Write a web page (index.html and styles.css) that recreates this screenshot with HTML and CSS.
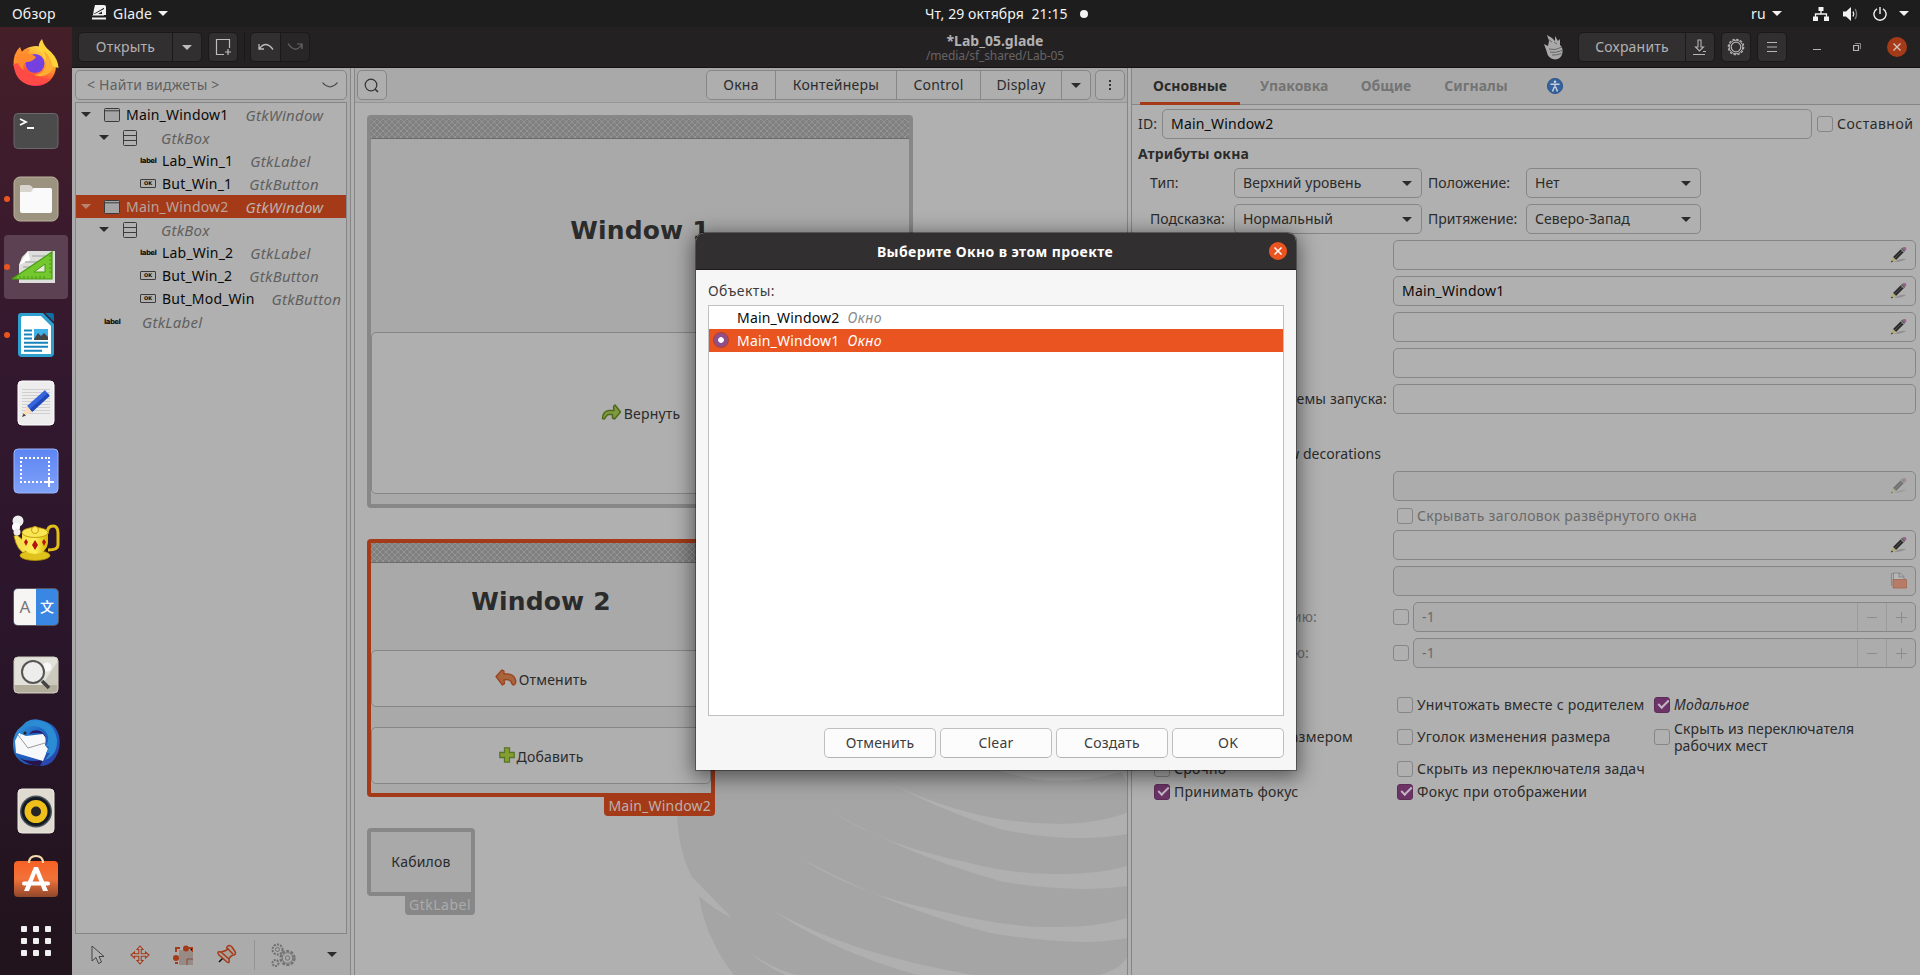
FILE: index.html
```html
<!DOCTYPE html>
<html lang="ru">
<head>
<meta charset="utf-8">
<title>*Lab_05.glade</title>
<link rel="stylesheet" href="styles.css">
</head>
<body>
<svg class="defs" width="0" height="0" aria-hidden="true">
  <defs>
    <pattern id="hatch" width="12" height="12" patternUnits="userSpaceOnUse">
      <rect width="12" height="12" fill="#808080"/>
      <path d="M0 0L12 12M12 0L0 12M6 0L0 6M6 0L12 6M0 6L6 12M12 6L6 12" stroke="#969696" stroke-width=".9" fill="none"/>
    </pattern>
    <linearGradient id="ffg" x1=".8" y1="0" x2=".3" y2="1"><stop offset="0" stop-color="#fff04a"/><stop offset=".4" stop-color="#ff9a2e"/><stop offset=".75" stop-color="#ff4a3a"/><stop offset="1" stop-color="#e8128c"/></linearGradient>
    <linearGradient id="tbg" x1="0" y1="0" x2="1" y2="1"><stop offset="0" stop-color="#3aa5e0"/><stop offset=".4" stop-color="#2068c4"/><stop offset="1" stop-color="#2b3ba8"/></linearGradient>
    <linearGradient id="swg" x1="0" y1="0" x2="0" y2="1"><stop offset="0" stop-color="#f76125"/><stop offset=".5" stop-color="#f2723a"/><stop offset="1" stop-color="#90472c"/></linearGradient>
    <linearGradient id="teag" x1="0" y1="0" x2="1" y2="0"><stop offset="0" stop-color="#f7e04a"/><stop offset=".5" stop-color="#fdf05a"/><stop offset="1" stop-color="#d9b400"/></linearGradient>
    <linearGradient id="shotg" x1="0" y1="0" x2="0" y2="1"><stop offset="0" stop-color="#5d85f3"/><stop offset="1" stop-color="#80a2f9"/></linearGradient>
    <symbol id="pencil" viewBox="0 0 18 18">
      <path d="M4 16Q10 12 16 13Q12 16 4 16" fill="#8f8f8f"/>
      <path d="M3 11L12 2L15 5L6 14Z" fill="#2b2b2b"/><path d="M4.5 12.5L13.5 3.5" stroke="#555" stroke-width=".9"/>
      <path d="M12 2L13.5 .9L16 1.2L16.3 3.4L15 5Z" fill="#96628c"/><path d="M11 3L14 6" stroke="#8c8c8c" stroke-width="1.4"/>
      <path d="M3 11L6 14L1 16.5Z" fill="#b3ab6d"/><path d="M1 16.5L1.8 14.4L3 15.6Z" fill="#111"/>
    </symbol>
    <symbol id="window" viewBox="0 0 16 14"><rect x=".5" y=".5" width="15" height="13" rx="1" fill="#a5a5a5" stroke="#3b3b3b"/><path d="M1 2.8H15" stroke="#3b3b3b" stroke-width="1"/></symbol>
    <symbol id="box" viewBox="0 0 14 16"><rect x=".5" y=".5" width="13" height="15" rx="1" fill="none" stroke="#3b3b3b"/><path d="M1 5.5H13M1 10.5H13" stroke="#3b3b3b"/></symbol>
  </defs>
</svg>

<header class="topbar">
  <div class="top-left"><span class="overview">Обзор</span>
    <svg width="14" height="16" viewBox="0 0 14 16"><path d="M3 0H12Q14 0 14 2V10H1L2 4Z" fill="#f2f2f2"/><path d="M1.5 9L12 2.8V8.6Z" fill="#1d1d1d"/><path d="M0 10.5L12 4V10.5ZM0 12.5H14V14.6H0Z" fill="#f2f2f2"/><path d="M6 9L10 6.6V9Z" fill="#1d1d1d"/></svg>
    <span class="appname">Glade</span><i class="caret light"></i></div>
  <div class="top-mid"><span>Чт, 29 октября&nbsp; 21:15</span><i class="dot"></i></div>
  <div class="top-right"><span>ru</span><i class="caret light"></i>
    <svg class="net" width="16" height="14" viewBox="0 0 16 14"><path d="M5.5 0h5v4h-5zM0 9.5h5V14H0zM11 9.5h5V14h-5z" fill="#f2f2f2"/><path d="M8 4V7M2.5 10V7H13.5V10" stroke="#f2f2f2" stroke-width="1.3" fill="none"/></svg>
    <svg width="16" height="14" viewBox="0 0 16 14"><path d="M0 4.5H3L8 0V14L3 9.5H0Z" fill="#f2f2f2"/><path d="M10 4.5Q11.5 7 10 9.5" stroke="#f2f2f2" stroke-width="1.4" fill="none"/><path d="M12 2Q15.2 7 12 12" stroke="#777" stroke-width="1.4" fill="none"/></svg>
    <svg width="14" height="14" viewBox="0 0 14 14"><path d="M4 1.8A6.1 6.1 0 1 0 10 1.8M7 0V7" stroke="#f2f2f2" stroke-width="1.4" fill="none"/></svg>
    <i class="caret light"></i></div>
</header>

<div class="desktop">
<nav class="dock">
  <div class="slot"><svg width="48" height="48" viewBox="0 0 48 48"><circle cx="24" cy="27" r="20" fill="url(#ffg)"/><path d="M1.5 27Q1 14 8 8L10 13Q14 9 18 10L14 18Z" fill="#ff9130"/><path d="M27 10Q26 4 30 0Q32 8 39 13Q46 20 46.500 29L36 26Z" fill="#ffd33a"/><path d="M1.500 25Q3 42 17 46Q30 48 38 40L20 38Q10 34 12 23Z" fill="#ff4a45"/><circle cx="23" cy="24.500" r="9.500" fill="#7540e0"/><path d="M4 17Q14 11 24 18Q21 23 14 23Q10 26 12 31Q5 28 4 17Z" fill="#ff8a2e"/><path d="M31 11Q35 18 34 26Q32 35 22 36Q34 40 41 30Q40 18 31 11" fill="#ffad33"/></svg></div>
  <div class="slot"><svg width="48" height="48" viewBox="0 0 48 48"><rect x="2" y="6.500" width="44" height="35" rx="4" fill="#4b4b4b" stroke="#696969"/><path d="M8 12L14 15L8 18M15 21H22" stroke="#fff" stroke-width="1.8" fill="none"/></svg></div>
  <div class="slot run"><svg width="48" height="48" viewBox="0 0 48 48"><rect x="2" y="2" width="44" height="44" rx="6" fill="#9b9280" stroke="#bdb59e"/><path d="M8 14V11Q8 10 10 10H17Q19 10 21 13H38Q40 13 40 15V25H8Z" fill="#d9d5ce"/><path d="M8 17H19L22 13H38Q40 13 40 15V36Q40 38 38 38H10Q8 38 8 36Z" fill="#fafafa"/></svg></div>
  <div class="slot run active"><svg width="48" height="48" viewBox="0 0 48 48"><path d="M10 14L16 8H43V40H7V22Z" fill="#dedfdc"/><path d="M7 22L16 8L18 17Z" fill="#fff"/><path d="M11 24H34M13 19H34M20 13H40" stroke="#b4b4b4" stroke-width="1.500"/><path d="M0 36L40 9V36Z" fill="#72c82c" stroke="#4b9916" stroke-width="1.200"/><path d="M22 29L33 21V29Z" fill="#e6ead9" stroke="#4b9916"/><path d="M4 36V33M8 36V33M12 36V33M16 36V33M20 36V33M24 36V33M28 36V33M32 36V33M40 13H37M40 17H37M40 21H37M40 25H37M40 29H37" stroke="#4b9916"/></svg></div>
  <div class="slot run"><svg width="48" height="48" viewBox="0 0 48 48"><path d="M9 2H31L42 13V42Q42 46 38 46H10Q6 46 6 42V5Q6 2 9 2Z" fill="#2ea0d0"/><path d="M33 2H40Q42 2 42 5V11Z" fill="#0f6ea6"/><path d="M11 5H29L39 15V43H9V8Q9 5 11 5Z" fill="#fff"/><path d="M12 19.500H20M12 23.500H20M12 27.500H20M12 31.800H36M12 35.800H36M12 39.800H30" stroke="#1784ba" stroke-width="2"/><rect x="22" y="18" width="14" height="11" fill="#3db1e8"/><path d="M22 28L26 22L29 25L32 22L36 26V29H22Z" fill="#444"/></svg></div>
  <div class="slot"><svg width="48" height="48" viewBox="0 0 48 48"><rect x="6" y="2" width="36" height="44" rx="4" fill="#ededed" stroke="#fff"/><path d="M10 10.500H38M10 13.500H38M10 16.500H38M10 19.500H38M10 22.500H38M10 25.500H38M10 28.500H38M10 31.500H38M10 34.500H38" stroke="#cfcfcf"/><path d="M15 27L33 11L37.500 17L20 33Z" fill="#3465df"/><path d="M18 30L36 14L37.500 17L20 33Z" fill="#2048b8"/><path d="M15 27L20 33L10 38Z" fill="#fbdcbc"/><path d="M10 38L11.500 34.500L14 36.500Z" fill="#444"/></svg></div>
  <div class="slot"><svg width="48" height="48" viewBox="0 0 48 48"><rect x="2" y="2" width="44" height="44" rx="4" fill="url(#shotg)" stroke="#9ab5fc"/><path d="M9 11H38" stroke="#fff" stroke-width="2" stroke-dasharray="2 2"/><path d="M9 10V36M37 10V30" stroke="#fff" stroke-width="2" stroke-dasharray="2 2" fill="none"/><path d="M8 35H32" stroke="#fff" stroke-width="2" stroke-dasharray="2 2"/><path d="M32 35H42M37 30V40" stroke="#fff" stroke-width="2"/></svg></div>
  <div class="slot"><svg width="48" height="48" viewBox="0 0 48 48"><path d="M35 19Q35 11 41 11Q46 11 46 18V30Q46 35 36 35" fill="none" stroke="#e2be1a" stroke-width="3"/><path d="M2 21L5 20L12 26L14 39Q5 36 2 21Z" fill="#f5df50" stroke="#b58f00" stroke-width=".8"/><ellipse cx="23" cy="40.500" rx="15" ry="5" fill="#e0c21c" stroke="#b58f00" stroke-width=".8"/><path d="M10 17H36V28Q35 38 23 39Q10 38 10 28Z" fill="url(#teag)"/><ellipse cx="23" cy="17.500" rx="13" ry="5" fill="#f8e654" stroke="#b58f00" stroke-width=".8"/><circle cx="23" cy="15" r="3.500" fill="#ffe95e" stroke="#c9a10a"/><path d="M23 25L26 30L23 35L20 30ZM14 24L16 27L14 31L12 27ZM32 24L34 27L32 31L30 27Z" fill="#b51212"/><circle cx="6" cy="6" r="5.500" fill="#eee"/><circle cx="4" cy="12" r="4" fill="#fff"/><circle cx="5" cy="17" r="3.500" fill="#ececec"/></svg></div>
  <div class="slot"><div class="translate"><b>A</b><b>文</b></div></div>
  <div class="slot"><svg width="48" height="48" viewBox="0 0 48 48"><rect x="2" y="6" width="44" height="36" rx="4" fill="#e2e2da" stroke="#cfcdbf"/><path d="M30 34L46 10V34Z" fill="#cbc9bc"/><path d="M2.500 34H45.500V38Q45 41.500 42 41.500H6Q3 41.500 2.500 38Z" fill="#b3ae9c"/><circle cx="35" cy="16" r="4.500" fill="#f8f8f8"/><circle cx="21" cy="21" r="11" fill="#eeeeec" fill-opacity=".9" stroke="#555" stroke-width="2"/><path d="M30 30L37 37" stroke="#444" stroke-width="3.500"/></svg></div>
  <div class="slot"><svg width="48" height="48" viewBox="0 0 48 48"><path d="M14 3Q20-1 28 1Q44 4 47 17Q50 32 40 43Q35 47 28 47L13 45Q2 40 1 28Q0 14 10 7Z" fill="url(#tbg)"/><path d="M6 37Q12 44 31 41L28 47Q14 46 6 37Z" fill="#26144a"/><path d="M3 22L7 14L14 17L31 15Q35 18 33 26L36 30L31 42L4 34Z" fill="#f7f8fa"/><path d="M6 16L16 29L33 24" stroke="#9b9b9b" fill="none"/><path d="M8 18Q10 6 22 7Q32 8 35 15Q38 20 34 27L37 28L34 34L38 34L33 41Q46 36 45 20Q42 5 30 2Q18-1 12 8Z" fill="#2b8bd3"/><path d="M20 12Q30 9 34 19L31 15Q26 13 17 15Z" fill="#2a1a6a"/><circle cx="13" cy="14" r="1.500" fill="#222"/></svg></div>
  <div class="slot"><svg width="48" height="48" viewBox="0 0 48 48"><rect x="6" y="2" width="36" height="44" rx="4" fill="#dfdbd1" stroke="#eeebe2"/><circle cx="24" cy="24.500" r="16" fill="#49535b"/><circle cx="24" cy="24.500" r="14.500" fill="#141a22"/><circle cx="24" cy="24.500" r="11.500" fill="#efc01c"/><circle cx="24" cy="24.500" r="5" fill="#262626"/></svg></div>
  <div class="slot"><svg width="48" height="48" viewBox="0 0 48 48"><rect x="2" y="6" width="44" height="36" rx="4" fill="url(#swg)"/><path d="M17 8Q17 1 24 1Q31 1 31 8" fill="none" stroke="#f6ddb0" stroke-width="2"/><path d="M22 12H26L36 36H31L24 18L17 36H12Z" fill="#fff"/><path d="M12 28.500H36" stroke="#fff" stroke-width="4" stroke-linecap="round"/></svg></div>
  <div class="apps"><i></i><i></i><i></i><i></i><i></i><i></i><i></i><i></i><i></i></div>
</nav>

<main class="app">
  <div class="headerbar">
    <div class="hb-left">
      <div class="hbtns"><span class="hbtn open">Открыть</span><span class="hbtn drop"><i class="caret dim"></i></span></div>
      <span class="hbtn icon"><svg width="17" height="18" viewBox="0 0 17 18"><path d="M9 16.500H1.500V1.500H14.500V10M13 11V17M10 14H16" stroke="#bdbdbd" fill="none" stroke-width="1.200"/></svg></span>
      <i class="hsep"></i>
      <div class="hbtns"><span class="hbtn undo"><svg width="16" height="10" viewBox="0 0 16 10"><path d="M1 2V7H6M1.500 6.500Q8-2 15 7.500" stroke="#bdbdbd" fill="none" stroke-width="1.300"/></svg></span><span class="hbtn undo off"><svg width="16" height="10" viewBox="0 0 16 10"><path d="M15 7V2H10M1 1.500Q8 12 14.500 3" stroke="#6a6869" fill="none" stroke-width="1.200"/></svg></span></div>
    </div>
    <div class="title"><b>*Lab_05.glade</b><span>/media/sf_shared/Lab-05</span></div>
    <div class="hb-right">
      <svg class="hand" width="19" height="25" viewBox="0 0 19 25"><path d="M3 0L8 3L11 6L11 1L14 6L16 4L16 10Q19 12 18.500 18Q17 24 11 24.500Q4 24 2.500 16L0 9L4 11L5 6Z" fill="#a9a9a9"/><path d="M5 14Q11 16 18 12M6 17Q11 18.500 18 15.500M8 20Q12 20.500 17.500 18.500M4 4L8 7M10 7L13 9" stroke="#4a4849" stroke-width=".7" fill="none"/></svg>
      <div class="hbtns"><span class="hbtn save">Сохранить</span><span class="hbtn drop"><svg width="14" height="17" viewBox="0 0 14 17"><path d="M5 1H8V8H10.500L6.500 12L2.500 8H5ZM0 15.500H12M10 12.500H13" stroke="#b5b5b5" fill="none" stroke-width="1.100"/></svg></span></div>
      <span class="hbtn icon"><svg width="18" height="18" viewBox="0 0 18 18"><circle cx="9" cy="9" r="4.800" fill="none" stroke="#b5b5b5" stroke-width="1.200"/><circle cx="9" cy="9" r="6.800" fill="none" stroke="#b5b5b5" stroke-width="1"/><circle cx="9" cy="9" r="7.700" fill="none" stroke="#b5b5b5" stroke-width="1.300" stroke-dasharray="2.400 1.632"/></svg></span>
      <span class="hbtn icon"><svg width="12" height="12" viewBox="0 0 12 12"><path d="M1 1.500H11M1 6H11M1 10.500H11" stroke="#b5b5b5" stroke-width="1.200"/></svg></span>
      <svg class="wc min" width="8" height="10"><path d="M0 7.500H8" stroke="#b5b5b5"/></svg>
      <svg class="wc res" width="8" height="9" viewBox="0 0 8 9"><path d="M.6 2.500H5.500V7.500H.6Z" stroke="#b5b5b5" fill="none" stroke-width="1.200"/><path d="M2 .5H7.500V6" stroke="#888" fill="none"/></svg>
      <svg class="wc" width="20" height="20" viewBox="0 0 20 20"><circle cx="10" cy="10" r="10" fill="#a43a18"/><path d="M6.500 6.500L13.500 13.500M13.500 6.500L6.500 13.500" stroke="#d4c4bd" stroke-width="1.400"/></svg>
    </div>
  </div>

  <div class="panes">
    <section class="left">
      <div class="find"><span>&lt; Найти виджеты &gt;</span><svg width="16" height="6" viewBox="0 0 16 6"><path d="M.5 .5Q3 4 8 5Q13 4 15.500 .5" fill="none" stroke="#444" stroke-width="1.100"/></svg></div>
      <div class="tree">
        <div class="row l1"><i class="caret"></i><svg width="16" height="14"><use href="#window"/></svg><span>Main_Window1</span><em>GtkWindow</em></div>
        <div class="row l2"><i class="caret"></i><svg width="14" height="16"><use href="#box"/></svg><em>GtkBox</em></div>
        <div class="row l3"><b class="lbl">label</b><span>Lab_Win_1</span><em>GtkLabel</em></div>
        <div class="row l3"><b class="ok">OK</b><span>But_Win_1</span><em>GtkButton</em></div>
        <div class="row l1 sel"><i class="caret"></i><svg width="16" height="14"><use href="#window"/></svg><span>Main_Window2</span><em>GtkWindow</em></div>
        <div class="row l2"><i class="caret"></i><svg width="14" height="16"><use href="#box"/></svg><em>GtkBox</em></div>
        <div class="row l3"><b class="lbl">label</b><span>Lab_Win_2</span><em>GtkLabel</em></div>
        <div class="row l3"><b class="ok">OK</b><span>But_Win_2</span><em>GtkButton</em></div>
        <div class="row l3"><b class="ok">OK</b><span>But_Mod_Win</span><em>GtkButton</em></div>
        <div class="row l0"><b class="lbl">label</b><em>GtkLabel</em></div>
      </div>
      <div class="tools">
        <svg width="15" height="20" viewBox="0 0 15 20"><path d="M1 1V16L5 12.500L7.500 18.500L10.500 17L8 11.500H13Z" fill="#b0b0b0" stroke="#444"/></svg>
        <svg width="20" height="20" viewBox="0 0 20 20"><path d="M10 1L13 4.500H11.200V8.800H15.500V7L19 10L15.500 13V11.200H11.200V15.500H13L10 19L7 15.500H8.800V11.200H4.500V13L1 10L4.500 7V8.800H8.800V4.500H7Z" fill="#b0b0b0" stroke="#a43a18" stroke-width="1.100"/></svg>
        <svg width="20" height="20" viewBox="0 0 20 20"><rect x="6" y="5" width="14" height="15" fill="#988a85"/><path d="M3 3H7M3 2V7M16 3H20V7M2 18H5" stroke="#a43a18" stroke-width="2"/><path d="M14 20V14H20" fill="none" stroke="#804c3b"/><circle cx="13" cy="3.500" r="3" fill="#a43a18"/><circle cx="3" cy="13" r="3" fill="#a43a18"/></svg>
        <svg width="21" height="21" viewBox="0 0 21 21"><path d="M7 14L3 18" stroke="#111" stroke-width="1.600"/><path d="M11 3Q13 0 16 3L18 6Q21 10 18 11Q15 11 13 15Q14 20 11 18L3 11Q0 7 5 8Q10 7 12 5Q10 4 11 3ZM12 5L17 10M5 8L13 15" fill="#aaa09c" stroke="#a43a18" stroke-width="1.500"/></svg>
        <i></i>
        <svg width="25" height="24" viewBox="0 0 25 24"><g fill="none" stroke="#717171"><circle cx="6.500" cy="6.500" r="5" stroke-width="2" stroke-dasharray="2 1.200"/><circle cx="6.500" cy="6.500" r="2"/><circle cx="16.500" cy="15" r="7" stroke-width="2.200" stroke-dasharray="3 1.500"/><circle cx="16.500" cy="15" r="5.300"/><circle cx="16.500" cy="15" r="2.200"/><circle cx="4.500" cy="20" r="3" stroke-width="2" stroke-dasharray="2 1"/></g></svg>
        <em class="caret"></em>
      </div>
    </section>

    <section class="center">
      <div class="cbar">
        <span class="btn sq"><svg class="lens" width="15" height="15" viewBox="0 0 15 15"><circle cx="7" cy="7" r="5.800" fill="none" stroke="#333" stroke-width="1.200"/><path d="M11 11L14 14" stroke="#333" stroke-width="1.600"/></svg></span>
        <div class="btn group"><span class="g1">Окна</span><span class="g2">Контейнеры</span><span class="g3">Control</span><span class="g4">Display</span><span class="g5"><i class="caret"></i></span></div>
        <span class="btn sq more"><svg width="4" height="12"><path d="M1 1h2v2h-2zM1 5h2v2h-2zM1 9h2v2h-2z" fill="#333"/></svg></span>
      </div>
      <div class="canvas">
        <svg class="art" width="452" height="205" viewBox="675 770 452 205">
          <path d="M675 770H1127V975H734Q722 960 715 945Q702 920 699 896Q715 910 732 918Q700 885 692 877Q678 850 677 812Z" fill="#a5a5a5"/>
          <g fill="#b0b0b0">
            <path d="M996 770Q1034 781 1054 781Q1090 781 1121 772L1127 782V770Z"/>
            <path d="M868 771Q920 802 988 817Q1025 824 1060 824Q1095 824 1127 813V834Q1105 838 1080 838Q1040 838 1000 829Q930 807 868 771Z"/>
            <path d="M832 812Q885 846 970 863Q1010 874 1055 874Q1095 875 1127 866V886Q1105 889 1085 889Q1040 889 1000 881Q910 856 832 812Z"/>
            <path d="M801 858Q855 894 940 911Q1003 927 1050 927Q1095 928 1127 918V938Q1105 942 1085 942Q1045 942 990 933Q890 907 801 858Z"/>
            <path d="M774 911Q850 954 973 975H917Q830 950 774 911Z"/>
            <path d="M752 954Q772 968 796 975H786Q765 966 752 954Z"/><path d="M1127 957Q1122 968 1100 975H1127Z"/>
          </g>
        </svg>
        <div class="widget w1"><svg class="strip" height="20"><rect width="100%" height="100%" fill="url(#hatch)"/></svg><h2>Window 1</h2><div class="wbtn"><svg width="22" height="17" viewBox="0 0 22 17"><path d="M2.500 14.500Q3 7 9 6.500H14L13.500 2.500L15 1L20.500 8L14.500 15L12.500 14V10.500H9Q7 10.500 4.500 15Z" fill="#7f9a3d" stroke="#4d6a1c" stroke-width="1.500" stroke-linejoin="round"/></svg><span>Вернуть</span></div></div>
        <div class="widget w2"><svg class="strip" height="20"><rect width="100%" height="100%" fill="url(#hatch)"/></svg><h2>Window 2</h2>
          <div class="wbtn"><svg width="22" height="17" viewBox="0 0 22 17"><path d="M1 7.500L7 1L9 2V5Q19 4 20.500 11Q21.500 15 19 16Q17 16 16 12.500Q14 10 9 11L9.500 14.500L7.500 16Z" fill="#a8653c" stroke="#9d4020" stroke-width="1.300" stroke-linejoin="round"/></svg><span>Отменить</span></div>
          <div class="wbtn"><svg width="16" height="16" viewBox="0 0 16 16"><path d="M5.500 .8H10.500V5.500H15.200V10.500H10.500V15.200H5.500V10.500H.8V5.500H5.500Z" fill="#879f32" stroke="#56762a" stroke-width="1.300"/></svg><span>Добавить</span></div>
          <span class="tag">Main_Window2</span></div>
        <div class="widget w3"><span>Кабилов</span><span class="tag">GtkLabel</span></div>
      </div>
    </section>

    <section class="props">
      <div class="tabs"><b class="on">Основные</b><b>Упаковка</b><b>Общие</b><b>Сигналы</b><svg width="16" height="16" viewBox="0 0 16 16"><circle cx="8" cy="8" r="7.600" fill="#34639d" stroke="#204a87" stroke-width=".8"/><circle cx="8" cy="3.700" r="1.300" fill="#c8d0d8"/><path d="M3.500 6.200H12.500M8 6V10M7.300 9L5.500 13.500M8.700 9L10.500 13.500" stroke="#c8d0d8" stroke-width="1.500"/></svg></div>
      <div class="idrow"><span class="idl">ID:</span><div class="entry">Main_Window2</div><i class="chk"></i><span class="comp">Составной</span></div>
      <h3>Атрибуты окна</h3>
      <div class="combos"><span>Тип:</span><div class="combo">Верхний уровень<i class="caret"></i></div><span>Положение:</span><div class="combo">Нет<i class="caret"></i></div>
        <span>Подсказка:</span><div class="combo">Нормальный<i class="caret"></i></div><span>Притяжение:</span><div class="combo">Северо-Запад<i class="caret"></i></div></div>
      <div class="fields">
        <div class="f"><div class="entry"><svg width="18" height="18"><use href="#pencil"/></svg></div></div>
        <div class="f"><div class="entry">Main_Window1<svg width="18" height="18"><use href="#pencil"/></svg></div></div>
        <div class="f"><div class="entry"><svg width="18" height="18"><use href="#pencil"/></svg></div></div>
        <div class="f"><div class="entry"></div></div>
        <div class="f"><span class="e1">системы запуска:</span><div class="entry"></div></div>
      </div>
      <div class="deco">window decorations</div>
      <div class="fields">
        <div class="f"><div class="entry off"><svg class="faded" width="18" height="18"><use href="#pencil"/></svg></div></div>
        <div class="ck hide off"><i class="chk"></i><span>Скрывать заголовок развёрнутого окна</span></div>
        <div class="f"><div class="entry"><svg width="18" height="18"><use href="#pencil"/></svg></div></div>
        <div class="f"><div class="entry off"><svg width="18" height="18" viewBox="0 0 18 18"><path d="M1.500 14V1.500H3M3.500 8V1H10L14 4.500V8M9 1V5H14" fill="#b6b6b6" stroke="#858585" stroke-width=".9"/><path d="M3 7.500H16.500V16H3Z" fill="#b77c67" stroke="#a56550" stroke-width=".8"/></svg></div></div>
        <div class="f spinrow"><span class="e2">умолчанию:</span><i class="chk"></i><div class="entry spin off">-1<b></b><b class="plus"></b></div></div>
        <div class="f spinrow"><span class="e3">умолчанию:</span><i class="chk"></i><div class="entry spin off">-1<b></b><b class="plus"></b></div></div>
      </div>
      <div class="flags">
        <div></div><div class="ck"><i class="chk"></i><span>Уничтожать вместе с родителем</span></div><div class="ck"><i class="chk yes"></i><em>Модальное</em></div>
        <div class="ck end"><span>размером</span></div><div class="ck"><i class="chk"></i><span>Уголок изменения размера</span></div><div class="ck two"><i class="chk"></i><span>Скрыть из переключателя<br>рабочих мест</span></div>
        <div class="ck"><i class="chk"></i><span>Срочно</span></div><div class="ck"><i class="chk"></i><span>Скрыть из переключателя задач</span></div><div></div>
        <div class="ck"><i class="chk yes"></i><span>Принимать фокус</span></div><div class="ck"><i class="chk yes"></i><span>Фокус при отображении</span></div><div></div>
      </div>
    </section>
  </div>
</main>
</div>

<div class="dialog" role="dialog">
  <div class="dhead"><b>Выберите Окно в этом проекте</b><svg width="18" height="18" viewBox="0 0 18 18"><circle cx="9" cy="9" r="9" fill="#e95420"/><path d="M5.500 5.500L12.500 12.500M12.500 5.500L5.500 12.500" stroke="#fff" stroke-width="1.500"/></svg></div>
  <div class="dbody">
    <div class="dl">Объекты:</div>
    <div class="list"><div class="item"><i></i><span>Main_Window2</span><em>Окно</em></div><div class="item on"><i></i><span>Main_Window1</span><em>Окно</em></div></div>
    <div class="acts"><span>Отменить</span><span>Clear</span><span>Создать</span><span>OK</span></div>
  </div>
</div>
</body>
</html>
```
FILE: styles.css
```css
* { box-sizing: border-box; }
html, body { margin: 0; width: 1920px; height: 975px; overflow: hidden; }
body { font: 14px/20px "Noto Sans", "Open Sans", sans-serif; letter-spacing: .2px; color: #2b2b2b; background: #b0b0b0; display: flex; flex-direction: column; white-space: nowrap; }
svg { display: block; flex: none; }
i, em { flex: none; }
.defs { position: absolute; }
.caret { display: block; width: 0; height: 0; border: 5px solid transparent; border-top-color: #2b2b2b; border-bottom: 0; }
.caret.light { border-top-color: #f2f2f2; }
.caret.dim { border-top-color: #bdbdbd; }

/* system bar */
.topbar { height: 27px; flex: none; background: #1d1d1d; color: #f2f2f2; display: grid; grid-template-columns: 925px 1fr 169px; }
.topbar > div { display: flex; align-items: center; height: 27px; }
.overview { width: 80px; margin-left: 12px; }
.top-left svg { margin-top: -1px; }
.appname { margin: 0 6px 0 7px; }
.dot { width: 8px; height: 8px; border-radius: 50%; background: #f2f2f2; margin-left: 12px; }
.top-mid { letter-spacing: .1px; }
.top-right .caret { margin-left: 6px; }
.top-right svg { margin-left: 14px; }
.top-right .net { margin-left: 31px; }
.top-right svg + .caret { margin-left: 12px; }

.desktop { display: flex; flex: 1; min-height: 0; }
.dock { width: 72px; flex: none; padding-top: 2px; background: linear-gradient(#451f28, #3a1a2d 22%, #32182e 38%, #2a152a 65%, #21141c); display: flex; flex-direction: column; letter-spacing: 0; }
.slot { height: 64px; width: 64px; margin: 2px 4px; flex: none; display: flex; align-items: center; justify-content: center; border-radius: 4px; position: relative; }
.slot.active { background: #5b4152; }
.slot.run::before { content: ""; position: absolute; left: 0; top: 29px; width: 6px; height: 6px; border-radius: 50%; background: #e95420; }
.translate { width: 44px; height: 36px; border-radius: 4px; overflow: hidden; display: flex; background: #3a86e3; color: #fff; font: 14px/36px "Noto Sans", "Noto Sans CJK SC", sans-serif; box-shadow: 0 0 0 1px #5a5560; }
.translate b { flex: 1; text-align: center; font-weight: 500; }
.translate b:first-child { background: #f6f5f3; color: #777; font-size: 17px; font-weight: 400; }
.apps { display: grid; grid-template-columns: repeat(3, 6px); gap: 6px; margin: 13px 0 0 21px; }
.apps i { height: 6px; background: #f0f0f0; border-radius: 1px; }

.app { flex: 1; display: flex; flex-direction: column; min-width: 0; }
.headerbar { height: 41px; flex: none; background: #242122; border-bottom: 1px solid #151314; display: grid; grid-template-columns: 780px 286px 1fr; color: #b3b1b2; }
.hb-left, .hb-right { display: flex; align-items: center; height: 40px; }
.hb-left { padding-left: 7px; }
.hbtns { display: flex; }
.hbtn { height: 28px; background: #312f30; display: flex; align-items: center; justify-content: center; border-radius: 4px; box-shadow: 0 0 0 1px #1b191a; }
.hbtn.open { width: 93px; } .hbtn.drop { width: 28px; margin-left: 1px; }
.hbtn.icon { width: 28px; margin-left: 8px; }
.hbtns .hbtn:first-child { border-radius: 4px 0 0 4px; } .hbtns .hbtn:last-child { border-radius: 0 4px 4px 0; }
.hsep { width: 1px; height: 30px; background: #1b191a; margin: 0 6px 0 7px; }
.hbtn.undo { width: 29px; } .hbtn.off { background: #292627; margin-left: 1px; width: 28px; }
.title { display: flex; flex-direction: column; align-items: center; justify-content: center; line-height: 15px; padding-top: 1px; }
.title b { letter-spacing: 0; }
.title span { font-size: 12px; color: #666465; letter-spacing: -.1px; }
.hand { margin: 1px 16px 0 406px; }
.save { width: 106px; }
.wc.min { margin: 0 32px 0 27px; } .wc.res { margin-right: 26px; }

.panes { flex: 1; display: flex; min-height: 0; }
.left { width: 279px; flex: none; background: #ababab; border-right: 1px solid #868686; padding: 2px 3px 0; display: flex; flex-direction: column; }
.find { height: 30px; border: 1px solid #868686; border-radius: 5px; background: #b0b0b0; color: #606060; display: flex; align-items: center; justify-content: space-between; padding: 0 8px 0 11px; flex: none; }
.tree { height: 832px; border: 1px solid #868686; background: #b0b0b0; margin-top: 2px; flex: none; color: #0a0a0a; overflow: hidden; }
.row { height: 23px; display: flex; align-items: center; }
.row em { font-size: 15px; letter-spacing: .25px; color: #606060; margin-left: 17px; }
.l1 { padding-left: 5px; } .l2 { padding-left: 23px; }
.l1 svg { margin: 0 6px 0 13px; } .l2 svg { margin: 0 6px 0 14px; }
.l3 { padding-left: 64px; } .l0 { padding-left: 28px; } .row.l0 em { margin-left: 16px; }
.row.l2 em { margin-left: 18px; }
.sel { background: #a43a18; color: #b8a39c; } .row.sel em { color: #bfb1ab; } .sel .caret { border-top-color: #b98472; }
.lbl { width: 16px; font: bold 7px/8px "DejaVu Sans"; letter-spacing: -.6px; margin-right: 6px; }
.ok { width: 16px; height: 9px; border: 1px solid #3b3b3b; border-radius: 1px; font: bold 5px/7px "DejaVu Sans"; letter-spacing: 0; text-align: center; margin-right: 6px; }
.tools { display: flex; align-items: center; height: 43px; padding-left: 16px; }
.tools svg:nth-child(2) { margin-left: 24px; } .tools svg:nth-child(3) { margin-left: 23px; } .tools svg:nth-child(4) { margin-left: 23px; }
.tools i { width: 1px; height: 30px; background: #949494; margin: 0 16px 0 17px; } .tools .caret { margin-left: 31px; }

.center { width: 774px; flex: none; margin-left: 3px; border: 1px solid #868686; border-width: 0 1px; display: flex; flex-direction: column; }
.cbar { height: 35px; flex: none; background: #a9a9a9; border-bottom: 1px solid #969696; display: flex; padding: 2px 2px 0 2px; }
.btn { height: 30px; border: 1px solid #868686; border-radius: 5px; background: #aeaeae; display: flex; align-items: center; justify-content: center; }
.lens { margin-right: 1px; }
.sq { width: 30px; } .more { margin-left: 4px; }
.group { margin-left: auto; }
.group span { height: 28px; line-height: 28px; text-align: center; border-left: 1px solid #868686; display: flex; align-items: center; justify-content: center; }
.group .g1 { border: 0; width: 68px; } .g2 { width: 121px; letter-spacing: .3px; } .g3 { width: 84px; } .g4 { width: 81px; } .g5 { width: 29px; }
.canvas { flex: 1; background: #b0b0b0; position: relative; overflow: hidden; }
.art { position: absolute; right: 0; bottom: 0; }
.widget { position: absolute; left: 12px; border: 4px solid #878787; border-radius: 4px; background: #a9a9a9; display: flex; flex-direction: column; }
.w1 { top: 12px; width: 546px; height: 393px; }
.w2 { top: 436px; width: 348px; height: 258px; border-color: #a43a18; border-bottom-right-radius: 0; }
.w3 { top: 725px; width: 108px; height: 68px; align-items: center; justify-content: center; border-bottom-right-radius: 0; }
.strip { width: 100%; border-bottom: 1px solid #6b6b6b; }
.widget h2 { margin: 0; flex: none; font: bold 25px/30px "DejaVu Sans", sans-serif; text-align: center; padding-top: 77px; height: 193px; letter-spacing: .15px; }
.widget.w2 h2 { padding-top: 24px; height: 87px; }
.wbtn { border: 1px solid #868686; border-radius: 5px; background: #afafaf; display: flex; align-items: center; justify-content: center; gap: 2px; height: 162px; padding-top: 2px; }
.wbtn svg { margin-top: -4px; }
.w2 .wbtn { height: 57px; margin-bottom: 20px; flex: none; }
.tag { position: absolute; right: -4px; top: 100%; margin-top: 3px; background: #a43a18; color: #bdb0ab; padding: 1px 4px 0; line-height: 17px; height: 20px; border-radius: 0 0 4px 4px; }
.w3 .tag { background: #878787; color: #ababab; letter-spacing: .5px; }

.props { flex: 1; margin-left: 3px; border-left: 1px solid #868686; background: #b0b0b0; min-width: 0; }
.tabs { height: 37px; background: #a9a9a9; border-bottom: 1px solid #868686; display: flex; padding-left: 8px; align-items: center; letter-spacing: 0; }
.tabs b { height: 37px; line-height: 36px; padding: 0 12px; color: #747474; margin-right: 8px; width: 92px; text-align: center; }
.tabs .on { color: #2b2b2b; border-bottom: 3px solid #a43a18; width: 100px; padding: 0; margin-right: 8px; }
.tabs b:nth-child(3) { width: 76px; } .tabs b:nth-child(4) { width: 88px; padding: 0; margin: 0 27px 0 0; }
.idrow { display: flex; align-items: center; margin-top: 4px; padding-left: 6px; }
.idl { width: 24px; } .idrow .entry { width: 650px; margin-right: 5px; }
.comp { letter-spacing: .5px; }
.entry { height: 30px; border: 1px solid #868686; border-radius: 5px; display: flex; align-items: center; padding: 0 7px 0 8px; color: #0a0a0a; }
.entry svg { margin-left: auto; } .entry.off { background: #acacac; color: #6a6a6a; } .faded { opacity: .45; }
.chk { width: 16px; height: 16px; border: 1px solid #868686; border-radius: 3px; display: block; margin-right: 4px; }
.chk.yes { background: #6b3366; border-color: #5f2c5a; position: relative; }
.chk.yes::after { content: ""; position: absolute; left: 3px; top: 2px; width: 9px; height: 4px; border: solid #c4b4c2; border-width: 0 0 2px 2px; transform: rotate(-45deg); }
h3 { font-size: 14px; line-height: 20px; margin: 5px 0 4px 6px; }
.combos { display: grid; grid-template-columns: 84px 188px 104px 175px; gap: 6px 0; align-items: center; padding-left: 18px; letter-spacing: .05px; }
.combos > span:nth-child(4n+3) { padding-left: 6px; }
.combo { height: 30px; border: 1px solid #868686; border-radius: 5px; display: flex; align-items: center; justify-content: space-between; padding: 0 9px 0 8px; }
.fields { display: grid; gap: 6px; margin-top: 6px; padding-right: 4px; }
.f { display: flex; justify-content: flex-end; align-items: center; gap: 4px; } .f .entry { width: 523px; }
.e1 { margin-right: 2px; }
.deco { width: 249px; text-align: right; margin-top: 30px; height: 27px; letter-spacing: .05px; }
.deco + .fields { margin-top: 0; }
.ck { display: flex; align-items: center; } .hide { margin-left: 265px; height: 17px; letter-spacing: .3px; } .ck.off { color: #6a6a6a; }
.spinrow .chk { margin-right: 0; } .f .spin { width: 503px; padding-right: 0; }
.spinrow span { color: #6a6a6a; } .e2 { margin-right: 72px; } .e3 { margin-right: 80px; }
.spin b { width: 29px; height: 28px; border-left: 1px solid #9b9b9b; background: linear-gradient(#8c8c8c, #8c8c8c) center / 10px 1px no-repeat; }
.spin b:first-of-type { margin-left: auto; } .spin .plus { background: linear-gradient(#8c8c8c, #8c8c8c) center / 11px 1px no-repeat, linear-gradient(#8c8c8c, #8c8c8c) center / 1px 11px no-repeat; }
.flags { display: grid; grid-template-columns: 243px 257px 1fr; grid-template-rows: 24px 40px 23px 23px; padding-left: 22px; margin-top: 25px; letter-spacing: .25px; }
.end { width: 199px; justify-content: flex-end; } .two { line-height: 17px; letter-spacing: .1px; }

/* chooser dialog */
.dialog { position: absolute; left: 696px; top: 233px; width: 600px; height: 537px; background: #f6f6f6; border-radius: 8px 8px 0 0; box-shadow: 0 0 0 1px rgba(0,0,0,.35), 0 4px 20px 3px rgba(0,0,0,.5); color: #3d3d3d; display: flex; flex-direction: column; }
.dhead { height: 37px; background: #322f30; border-bottom: 1px solid #1d1b1c; border-radius: 8px 8px 0 0; color: #fff; display: flex; align-items: center; justify-content: flex-end; padding-right: 9px; }
.dhead b { flex: 1; text-align: center; padding: 2px 0 0 25px; letter-spacing: .4px; }
.dbody { padding: 11px 12px 12px; }
.dl { height: 24px; letter-spacing: .4px; }
.list { height: 411px; border: 1px solid #c0c0c0; background: #fff; color: #0a0a0a; }
.item { height: 23px; display: flex; align-items: center; padding: 0 0 0 4px; }
.item i { width: 16px; height: 16px; border-radius: 50%; margin: -1px 8px 0 0; }
.item em { color: #8a8a8a; margin-left: 8px; letter-spacing: .5px; }
.item.on { background: #e95420; color: #fff; } .item.on em { color: #fff; }
.item.on i { background: radial-gradient(circle, #fff 2.500px, #924d8b 3.200px); border: 1px solid #a8432d; }
.acts { display: flex; justify-content: flex-end; gap: 4px; margin-top: 12px; }
.acts span { width: 112px; height: 30px; border: 1px solid #c0c0c0; border-bottom-color: #b2b2b2; border-radius: 5px; background: #fcfcfc; text-align: center; line-height: 27px; }
```
